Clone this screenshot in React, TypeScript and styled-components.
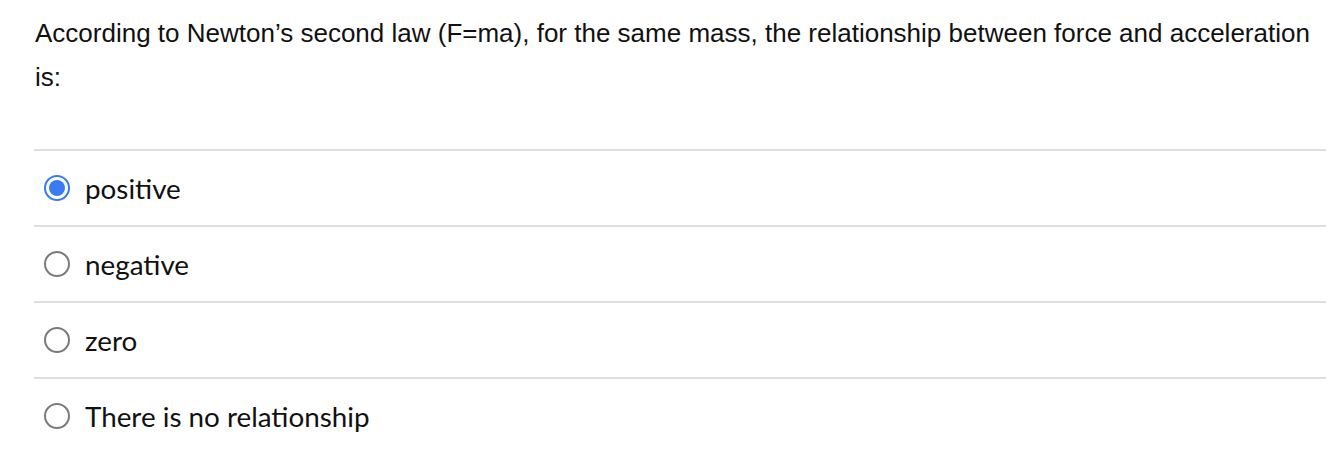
import React, { useState } from "react";
import styled, { createGlobalStyle } from "styled-components";

const Global = createGlobalStyle`
  html, body { margin: 0; padding: 0; background: #fff; }
`;

const Page = styled.div`
  padding: 11px 2px 0 34px;
`;

const Question = styled.p`
  margin: 0 0 50px 1px;
  font-family: "Liberation Sans", Arial, sans-serif;
  font-size: 26px;
  line-height: 44px;
  color: #111;
`;

const Options = styled.div`
  display: flex;
  flex-direction: column;
`;

const Row = styled.label`
  display: flex;
  align-items: center;
  gap: 15px;
  height: 74px;
  border-top: 2px solid #dedede;
  padding-left: 10px;
  cursor: pointer;
`;

const Radio = styled.span<{ $checked: boolean }>`
  box-sizing: border-box;
  width: 26px;
  height: 26px;
  border-radius: 50%;
  border: ${(p) => (p.$checked ? "2px solid #3a7bf0" : "2px solid #7a7a7a")};
  display: flex;
  align-items: center;
  justify-content: center;
  flex: none;
  &::after {
    content: "";
    display: ${(p) => (p.$checked ? "block" : "none")};
    width: 16px;
    height: 16px;
    border-radius: 50%;
    background: #3a7bf0;
  }
`;

const Label = styled.span`
  font-family: Lato, "Noto Sans", sans-serif;
  font-size: 27.8px;
  color: #111;
`;

const options = ["positive", "negative", "zero", "There is no relationship"];

export default function App() {
  const [sel, setSel] = useState(0);
  return (
    <Page>
      <Global />
      <Question>
        According to Newton’s second law (F=ma), for the same mass, the relationship between force and acceleration is:
      </Question>
      <Options>
        {options.map((o, i) => (
          <Row key={o} onClick={() => setSel(i)}>
            <Radio $checked={sel === i} />
            <Label>{o}</Label>
          </Row>
        ))}
      </Options>
    </Page>
  );
}
